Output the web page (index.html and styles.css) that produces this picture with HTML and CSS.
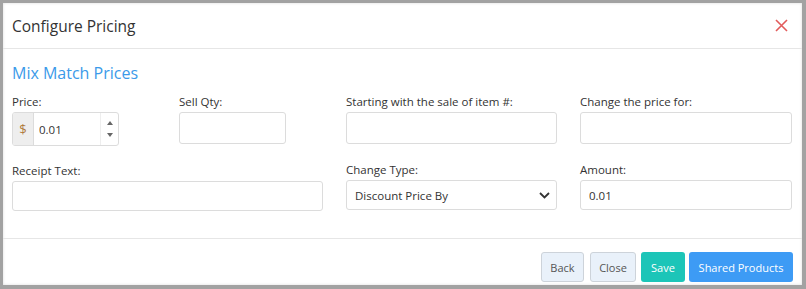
FILE: index.html
```html
<!doctype html>
<html lang="en">
<head>
<meta charset="utf-8" />
<title>Configure Pricing</title>
<link rel="stylesheet" href="styles.css">
</head>
<body>
  <div class="modal">
    <!-- header -->
    <div class="modal-header">
      <h4 class="modal-title">Configure Pricing</h4>
      <button class="btn-x" aria-label="Close">
        <svg width="13" height="13" viewBox="0 0 13 13"><path d="M1 1L12 12M12 1L1 12" stroke="#e25b5b" stroke-width="1.6" fill="none"/></svg>
      </button>
    </div>

    <!-- body -->
    <div class="modal-body">
      <h5 class="section-title">Mix Match Prices</h5>

      <div class="form-grid">
        <div class="pair">
          <div class="field small">
            <label>Price:</label>
            <div class="input-group">
              <span class="addon">$</span>
              <input class="ctl" value="0.01">
              <span class="spin">
                <svg width="8" height="6" viewBox="0 0 8 6"><path d="M4 1L7 5H1Z" fill="#666"/></svg>
                <svg width="8" height="6" viewBox="0 0 8 6"><path d="M4 5L7 1H1Z" fill="#666"/></svg>
              </span>
            </div>
          </div>
          <div class="field small">
            <label>Sell Qty:</label>
            <input class="ctl box">
          </div>
        </div>
        <div class="field">
          <label>Starting with the sale of item #:</label>
          <input class="ctl box">
        </div>
        <div class="field">
          <label>Change the price for:</label>
          <input class="ctl box">
        </div>

        <div class="field row2 receipt">
          <label>Receipt Text:</label>
          <input class="ctl box">
        </div>
        <div class="field row2">
          <label>Change Type:</label>
          <div class="select box">
            <span>Discount Price By</span>
            <svg width="11" height="7" viewBox="0 0 11 7"><path d="M1 1L5.5 5.5L10 1" stroke="#333" stroke-width="1.8" fill="none"/></svg>
          </div>
        </div>
        <div class="field row2">
          <label>Amount:</label>
          <input class="ctl box" value="0.01">
        </div>
      </div>
    </div>

    <!-- footer -->
    <div class="modal-footer">
      <button class="btn btn-light back">Back</button>
      <button class="btn btn-light close">Close</button>
      <button class="btn btn-save">Save</button>
      <button class="btn btn-blue">Shared Products</button>
    </div>
  </div>
</body>
</html>
```

FILE: styles.css
```css
*{margin:0;padding:0;box-sizing:border-box}
body{
  background:#a2a2a2;
  font-family:"Open Sans","Noto Sans",sans-serif;
  color:#333;
  padding:3px 4px 0 3px;
  height:289px;overflow:hidden;
}

/* === modal === */
.modal{
  background:#fff;
  height:282px;
  box-shadow:inset 0 0 3px rgba(0,0,0,.15);
}
.modal-header{
  height:46px;
  display:flex;align-items:center;justify-content:space-between;
  padding:0 14px 0 9px;
  border-bottom:1px solid #e6e6e6;
}
.modal-title{font-size:15.5px;font-weight:400;color:#333;}
.btn-x{border:0;background:none;display:flex;}

.modal-body{padding:14px 9px 0 9px;height:175px;border-bottom:1px solid #e6e6e6;box-sizing:content-box;}
.section-title{font-size:16px;font-weight:400;color:#3b9ae9;line-height:20px;}

/* === form === */
.form-grid{
  margin-top:11px;
  display:grid;
  grid-template-columns:311px 211px 212px;
  column-gap:23px;
}
.pair{display:flex;gap:60px;}
.field{display:flex;flex-direction:column;}
.field.small{width:107px;}
.field label{font-size:11.5px;line-height:16px;margin-bottom:2px;color:#333;}
.row2{margin-top:16px;}
.receipt{margin-top:17px;}

.ctl{
  font-family:inherit;font-size:11.5px;color:#333;
  height:32px;padding:0 8px;outline:none;
  border:1px solid #dcdcdc;border-radius:3px;background:#fff;
}
.row2 .ctl,.row2 .select{height:30px;}

.input-group{display:flex;height:34px;border:1px solid #dcdcdc;border-radius:3px;overflow:hidden;}
.input-group .addon{
  width:21px;background:#eee;border-right:1px solid #dcdcdc;
  display:flex;align-items:center;justify-content:center;
  font-size:13px;color:#b07a3c;
}
.input-group .ctl{border:0;border-radius:0;flex:1;min-width:0;height:32px;padding:0 5px;}
.spin{width:18px;display:flex;flex-direction:column;justify-content:center;align-items:center;gap:6px;border-left:1px solid #eee;}

.select{
  display:flex;align-items:center;justify-content:space-between;
  padding:0 6px 0 8px;font-size:11.5px;
  border:1px solid #dcdcdc;border-radius:3px;
}

/* === footer === */
.modal-footer{
  display:flex;justify-content:flex-end;gap:5px;
  padding:13px 9px 0;
}
.btn{
  font-family:inherit;font-size:11px;height:30px;padding:0;
  border-radius:3px;border:1px solid transparent;
}
.btn-light{background:#e9f1fa;border-color:#cdd3da;color:#555;}
.back{width:43px;margin-right:1px;}
.close{width:46px;}
.btn-save{background:#1cc5b8;color:#fff;width:44px;margin-right:-1px;}
.btn-blue{background:#3d9bf5;color:#fff;width:104px;}
```
